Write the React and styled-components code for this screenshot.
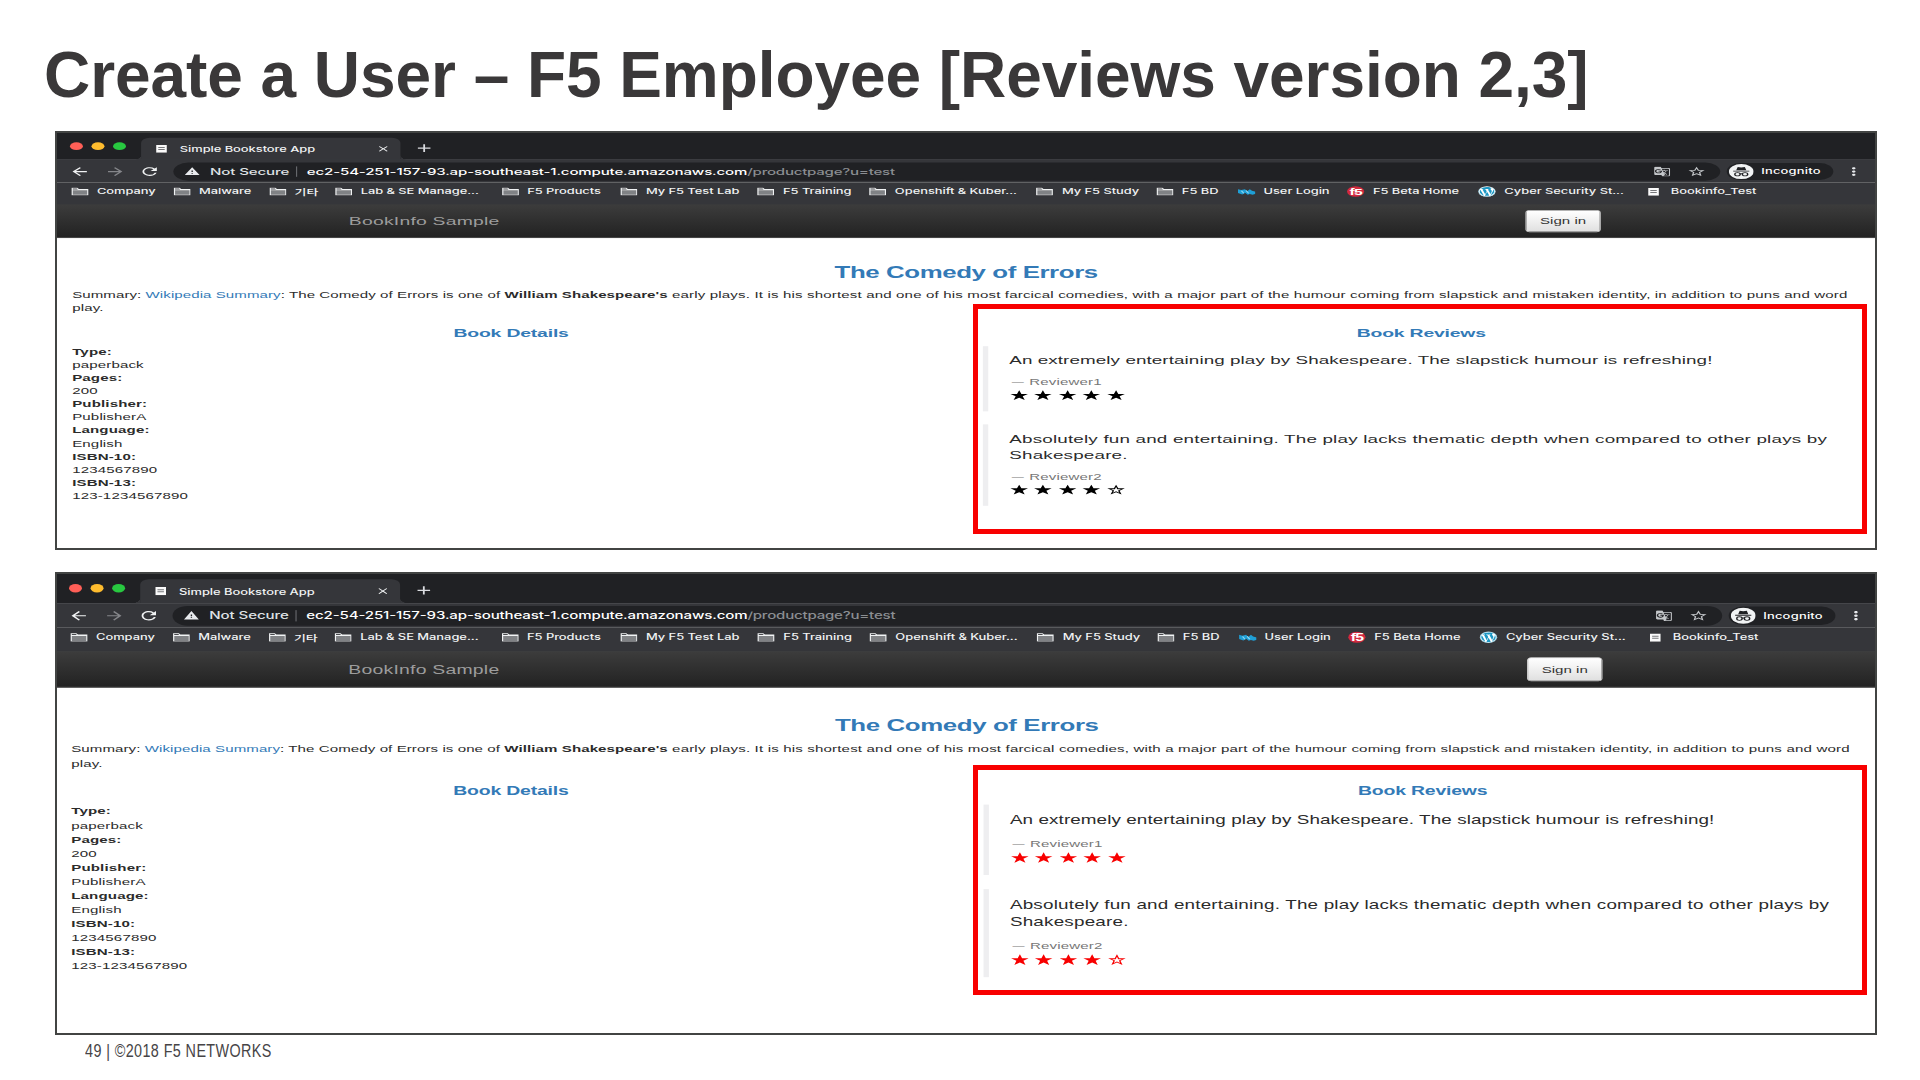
import React from "react";
import styled, { createGlobalStyle } from "styled-components";
import {
  MdArrowBack,
  MdArrowForward,
  MdRefresh,
  MdWarning,
  MdStarBorder,
  MdMoreVert,
  MdClose,
  MdAdd,
  MdGTranslate,
} from "react-icons/md";
import { FaWordpress } from "react-icons/fa";

const sans = `"Liberation Sans", Arial, Helvetica, sans-serif`;
const ui = `Inter, Roboto, "Noto Sans CJK KR", sans-serif`;

const GlobalStyle = createGlobalStyle`
  * { box-sizing: border-box; }
  body { margin: 0; background: #fff; overflow: hidden; }
`;

const Slide = styled.main`
  width: 1920px;
  height: 1080px;
  padding-left: 55px;
  overflow: hidden;
  display: flex;
  flex-direction: column;
  align-items: flex-start;
  background: #fff;
  font-family: ${sans};
`;

const Title = styled.h1`
  margin: 0 0 0 -11px;
  height: 131px;
  padding-top: 38px;
  font-size: 64px;
  line-height: 74px;
  letter-spacing: -0.06px;
  font-weight: 700;
  color: #3a3839;
  white-space: nowrap;
`;

const Frame = styled.section`
  position: relative;
  flex: none;
  width: 1822px;
  height: ${(p) => p.$height}px;
  margin-bottom: ${(p) => p.$gap}px;
  border: 2px solid #424443;
  background: #fff;
`;

const Viewport = styled.div`
  width: 100%;
  height: 100%;
  overflow: hidden;
`;

const Screen = styled.div`
  width: 1691px;
  height: 640px;
  margin-left: ${(p) => p.$shift}px;
  transform-origin: 0 0;
  transform: translateY(-0.5px) scale(${(p) => p.$sx}, ${(p) => p.$sy});
`;

const Highlight = styled.div`
  position: absolute;
  left: 916px;
  top: ${(p) => p.$top}px;
  width: 894px;
  height: 230px;
  border: 5px solid #f80000;
`;

/* Browser chrome */
const TabStrip = styled.div`
  display: flex;
  height: 42px;
  padding: 8px 0 0 13px;
  background: #202124;
`;

const Lights = styled.div`
  display: flex;
  gap: 8px;
  padding-top: 7px;
  width: 66px;
`;

const Light = styled.span`
  width: 12px;
  height: 12px;
  border-radius: 50%;
  background: ${(p) => p.$color};
`;

const Tab = styled.div`
  position: relative;
  display: flex;
  align-items: center;
  width: 241px;
  height: 34px;
  padding: 0 9px 0 14px;
  border-radius: 8px 8px 0 0;
  background: #35363a;
  color: #f1f3f4;
  font: 500 12px ${ui};

  &::before,
  &::after {
    content: "";
    position: absolute;
    bottom: 0;
    width: 8px;
    height: 8px;
  }
  &::before {
    left: -8px;
    background: radial-gradient(circle at 0 0, transparent 8px, #35363a 8.5px);
  }
  &::after {
    right: -8px;
    background: radial-gradient(circle at 100% 0, transparent 8px, #35363a 8.5px);
  }
`;

const TabTitle = styled.span`
  flex: 1;
  margin-left: 12px;
  white-space: nowrap;
  letter-spacing: -0.06px;
`;

const PlusSlot = styled.span`
  margin: 6px 0 0 12px;
  color: #dadce0;
`;

const Toolbar = styled.div`
  display: flex;
  align-items: center;
  height: 35px;
  padding-left: 12px;
  background: #35363a;
  color: #e8eaed;
`;

const NavIcons = styled.div`
  display: flex;
  align-items: center;
  gap: 12.5px;
  width: 97px;
`;

const NavIcon = styled.span`
  display: flex;
  width: 20px;
  color: ${(p) => (p.$dim ? "#85868a" : "#f1f3f4")};
`;

const Omnibox = styled.div`
  display: flex;
  align-items: center;
  width: 1437px;
  height: 28px;
  padding: 0 13px 0 10px;
  border-radius: 14px;
  background: #202124;
  font: 500 14px ${ui};
  white-space: nowrap;
`;

const Secure = styled.span`
  width: 80px;
  margin-left: 9px;
  letter-spacing: -0.1px;
  color: #dfe1e5;
`;

const Separator = styled.span`
  width: 1px;
  height: 16px;
  margin-right: 9px;
  background: #6b6d71;
`;

const Url = styled.span`
  flex: 1;
  color: #fff;
  letter-spacing: -0.15px;
`;

const UrlPath = styled.span`
  color: #8b8e92;
  letter-spacing: -0.22px;
`;

const OmniIcons = styled.span`
  display: flex;
  align-items: center;
  gap: 15px;
  color: #c4c7ca;
`;

const Incognito = styled.div`
  display: flex;
  align-items: center;
  gap: 7px;
  width: 99px;
  height: 26px;
  margin-left: 6px;
  padding-left: 2px;
  border-radius: 13px;
  background: #202124;
  color: #fff;
  font: 500 12px ${ui};
  letter-spacing: 0.2px;
`;

const MoreSlot = styled.span`
  display: flex;
  margin-left: 9px;
`;

const Bookmarks = styled.div`
  display: flex;
  align-items: center;
  height: 34px;
  padding: 0 0 6px 14px;
  background: #35363a;
  border-bottom: 1px solid #27282a;
`;

const Bookmark = styled.div`
  display: flex;
  align-items: center;
  gap: ${(p) => p.$gap}px;
  flex: none;
  width: ${(p) => p.$width}px;
  color: #f1f3f4;
  font: 500 12px ${ui};
  letter-spacing: -0.05px;
  white-space: nowrap;
`;

/* Page */
const Navbar = styled.div`
  display: flex;
  align-items: center;
  height: 51px;
  padding: 0 256px 1px 272px;
  justify-content: space-between;
  background: linear-gradient(#3c3c3c, #222);
  border-bottom: 1px solid #080808;
`;

const Brand = styled.span`
  font-size: 18px;
  line-height: 20px;
  color: #9d9d9d;
  letter-spacing: 0.2px;
`;

const SignIn = styled.button`
  width: 70px;
  height: 34px;
  padding: 0;
  border: 1px solid #ccc;
  border-radius: 4px;
  background: linear-gradient(#fff, #e0e0e0);
  font: 14px ${sans};
  color: #333;
`;

const Page = styled.div`
  display: flow-root;
  color: #2b2b2b;
  font-size: 14px;
  line-height: 20px;
  letter-spacing: 0.13px;
`;

const BookTitle = styled.h3`
  margin: 41px 0 10px;
  text-align: center;
  font-size: 24px;
  line-height: 26.4px;
  letter-spacing: -0.38px;
  font-weight: 700;
  color: #337ab7;
`;

const Summary = styled.p`
  margin: -0.5px 0 10.5px;
  padding: 0 15px;
  letter-spacing: 0.14px;
`;

const Lead = styled.span`
  letter-spacing: 0.06px;
`;

const Link = styled.span`
  color: #337ab7;
`;

const Columns = styled.div`
  display: grid;
  grid-template-columns: 1fr 1fr;
`;

const Column = styled.div`
  padding: 10px 15px 0;
`;

const Heading = styled.h4`
  margin: 0 0 9px;
  text-align: center;
  font-size: 18px;
  line-height: 19.8px;
  letter-spacing: -0.17px;
  font-weight: 700;
  color: #337ab7;
`;

const Details = styled.dl`
  margin: -1px 0 0;
`;

const Term = styled.dt`
  font-weight: 700;
`;

const Value = styled.dd`
  margin: 0;
`;

const Review = styled.blockquote`
  margin: 0 0 20px;
  padding: 10px 20px;
  border-left: 5px solid #eeeef0;
  font-size: 17.5px;
  line-height: 25px;
`;

const Quote = styled.p`
  margin: 0 -10px 9.5px 0;
  letter-spacing: ${(p) => p.$spacing}px;
`;

const Reviewer = styled.small`
  display: flex;
  font-size: 14px;
  line-height: 20px;
  color: #777;
`;

const Dash = styled.span`
  width: 18.6px;
  transform: scaleX(0.8);
  transform-origin: 9px 0;
`;

const Stars = styled.div`
  display: flex;
  align-items: center;
  gap: 5.1px;
  height: 25.5px;
  padding-bottom: 4px;
  color: ${(p) => p.$color};
`;

const Footer = styled.footer`
  margin: 6px 0 0 30px;
  font-size: 17.5px;
  line-height: 20px;
  letter-spacing: 0.5px;
  color: #464446;
  white-space: nowrap;
  transform: scaleX(0.82);
  transform-origin: 0 0;
`;

const Folder = () => (
  <svg width="16.5" height="13" viewBox="0 0 16.5 13">
    <path d="M.5 12.5V.8h5.3l1.5 1.9H16v9.8z" fill="#f1f3f4" />
    <path d="M1.6 2h3.7l1 1.3H1.6z" fill="#4a4b4f" />
    <path d="M1.6 4.8h13.4v6.9H1.6z" fill="#808285" />
  </svg>
);

const PageIcon = ({ size = 10 }) => (
  <svg width={size} height="12" viewBox="0 0 10 12">
    <path d="M0 0h10v12H0z" fill="#fafafa" />
    <path d="M2 4h6M2 7h6" stroke="#77787b" strokeWidth="1.4" />
  </svg>
);

const Wave = () => (
  <svg width="16.5" height="14" viewBox="0 0 16.5 14">
    <path
      d="M0 3l3 1.2L6.5 3l2 3L11 3l2 2.5 3.5 1.5v3l-3 1.5-2.5-1-2 1-2.5-3L4 11 0 9z"
      fill="#1f9fd6"
    />
    <path d="M3.2 5.5l2.3 4M7.5 5l2.4 4.4" stroke="#8fd8f4" strokeWidth="1.2" />
  </svg>
);

const F5Logo = () => (
  <svg width="16.5" height="17" viewBox="0 0 17 17">
    <circle cx="8.5" cy="8.5" r="8.2" fill="#d3283e" />
    <text
      x="8.7"
      y="13.8"
      textAnchor="middle"
      fontFamily="Liberation Sans, Arial, sans-serif"
      fontSize="15"
      fontWeight="700"
      letterSpacing="-0.6"
      fill="#fff"
    >
      f5
    </text>
  </svg>
);

const WordPress = () => (
  <svg width="16.5" height="17" viewBox="0 0 17 17">
    <circle cx="8.5" cy="8.5" r="8.3" fill="#fff" />
    <FaWordpress x="0.2" y="0.2" size="16.6" color="#1c97c4" />
  </svg>
);

const Spy = () => (
  <svg width="23" height="24" viewBox="0 0 23 24">
    <circle cx="11.5" cy="12" r="11.5" fill="#f1f3f4" />
    <path d="M8.2 5l3.3.6 3.3-.6 1.4 5H6.8z" fill="#202124" />
    <path d="M4 11.3h15" stroke="#202124" strokeWidth="1.5" />
    <g fill="none" stroke="#202124" strokeWidth="1.3">
      <circle cx="8" cy="16" r="2.5" />
      <circle cx="15" cy="16" r="2.5" />
      <path d="M10.5 15.5q1-.7 2 0" />
    </g>
  </svg>
);

const starPath =
  "M8.75 .6l2.05 5.6h6.1l-4.9 3.6 1.9 5.9-5.15-3.6-5.15 3.6 1.9-5.9L.6 6.2h6.1z";

const Star = ({ hollow }) => (
  <svg width="17.5" height="16" viewBox="0 0 17.5 16">
    <path d={starPath} fill="currentColor" />
    {hollow && (
      <path
        d="M8.75 4l1.1 3.4h3.6l-2.9 2.1 1.1 3.3-2.9-2-2.9 2 1.1-3.3L4.05 7.4h3.6z"
        fill="#fff"
      />
    )}
  </svg>
);

const icons = { folder: Folder, wave: Wave, f5: F5Logo, wp: WordPress, page: PageIcon };

const bookmarks = [
  ["Company", 94.8],
  ["Malware", 88.8],
  ["기타", 61.4],
  ["Lab & SE Manage...", 154.7],
  ["F5 Products", 110.3],
  ["My F5 Test Lab", 127.4],
  ["F5 Training", 103.9],
  ["Openshift & Kuber...", 155.2],
  ["My F5 Study", 111.4],
  ["F5 BD", 75.8],
  ["User Login", 101.7, "wave"],
  ["F5 Beta Home", 122.1, "f5"],
  ["Cyber Security St...", 157.2, "wp"],
  ["Bookinfo_Test", 120, "page"],
];

const details = [
  ["Type:", "paperback"],
  ["Pages:", "200"],
  ["Publisher:", "PublisherA"],
  ["Language:", "English"],
  ["ISBN-10:", "1234567890"],
  ["ISBN-13:", "123-1234567890"],
];

const reviews = [
  {
    text: "An extremely entertaining play by Shakespeare. The slapstick humour is refreshing!",
    by: "Reviewer1",
    stars: 5,
    spacing: 0.07,
  },
  {
    text: "Absolutely fun and entertaining. The play lacks thematic depth when compared to other plays by Shakespeare.",
    by: "Reviewer2",
    stars: 4,
    spacing: 0.168,
  },
];

function BrowserChrome() {
  return (
    <>
      <TabStrip>
        <Lights>
          <Light $color="#ff5f57" />
          <Light $color="#febc2e" />
          <Light $color="#28c840" />
        </Lights>
        <Tab>
          <PageIcon />
          <TabTitle>Simple Bookstore App</TabTitle>
          <MdClose size={14} />
        </Tab>
        <PlusSlot>
          <MdAdd size={20} />
        </PlusSlot>
      </TabStrip>
      <Toolbar>
        <NavIcons>
          <NavIcon><MdArrowBack size={20} /></NavIcon>
          <NavIcon $dim><MdArrowForward size={20} /></NavIcon>
          <NavIcon><MdRefresh size={22} /></NavIcon>
        </NavIcons>
        <Omnibox>
          <MdWarning size={15} />
          <Secure>Not Secure</Secure>
          <Separator />
          <Url>
            ec2-54-251-157-93.ap-southeast-1.compute.amazonaws.com
            <UrlPath>/productpage?u=test</UrlPath>
          </Url>
          <OmniIcons>
            <MdGTranslate size={16} />
            <MdStarBorder size={18} />
          </OmniIcons>
        </Omnibox>
        <Incognito>
          <Spy />
          Incognito
        </Incognito>
        <MoreSlot>
          <MdMoreVert size={20} />
        </MoreSlot>
      </Toolbar>
      <Bookmarks>
        {bookmarks.map(([label, width, icon = "folder"]) => {
          const Icon = icons[icon];
          return (
            <Bookmark key={label} $width={width} $gap={icon === "page" ? 11.5 : 7.5}>
              <Icon />
              {label}
            </Bookmark>
          );
        })}
      </Bookmarks>
    </>
  );
}

function BookWindow({ height, gap, shift, sx, sy, highlightTop, starColor }) {
  return (
    <Frame $height={height} $gap={gap}>
      <Viewport>
        <Screen $shift={shift} $sx={sx} $sy={sy}>
          <BrowserChrome />
          <Navbar>
            <Brand>BookInfo Sample</Brand>
            <SignIn>Sign in</SignIn>
          </Navbar>
          <Page>
            <BookTitle>The Comedy of Errors</BookTitle>
            <Summary>
              <Lead>
                Summary: <Link>Wikipedia Summary</Link>: The Comedy of Errors is one of{" "}
                <b>William Shakespeare's</b>
              </Lead>{" "}
              early plays. It is his shortest and one of his most farcical comedies, with a
              major part of the humour coming from slapstick and mistaken identity, in
              addition to puns and word
              <br />
              play.
            </Summary>
            <Columns>
              <Column>
                <Heading>Book Details</Heading>
                <Details>
                  {details.map(([term, value]) => (
                    <React.Fragment key={term}>
                      <Term>{term}</Term>
                      <Value>{value}</Value>
                    </React.Fragment>
                  ))}
                </Details>
              </Column>
              <Column>
                <Heading>Book Reviews</Heading>
                {reviews.map((r) => (
                  <Review key={r.by}>
                    <Quote $spacing={r.spacing}>{r.text}</Quote>
                    <Reviewer>
                      <Dash>—</Dash>
                      {r.by}
                    </Reviewer>
                    <Stars $color={starColor}>
                      {[1, 2, 3, 4, 5].map((n) => (
                        <Star key={n} hollow={n > r.stars} />
                      ))}
                    </Stars>
                  </Review>
                ))}
              </Column>
            </Columns>
          </Page>
        </Screen>
      </Viewport>
      <Highlight $top={highlightTop} />
    </Frame>
  );
}

export default function App() {
  return (
    <>
      <GlobalStyle />
      <Slide>
        <Title>Create a User – F5 Employee [Reviews version 2,3]</Title>
        <BookWindow
          height={419}
          gap={22}
          shift={-1}
          sx={1.0765}
          sy={0.6515}
          highlightTop={171}
          starColor="#000"
        />
        <BookWindow
          height={463}
          gap={0}
          shift={-2.2}
          sx={1.0784}
          sy={0.7045}
          highlightTop={191}
          starColor="#f80000"
        />
        <Footer>49 | ©2018 F5 NETWORKS</Footer>
      </Slide>
    </>
  );
}
